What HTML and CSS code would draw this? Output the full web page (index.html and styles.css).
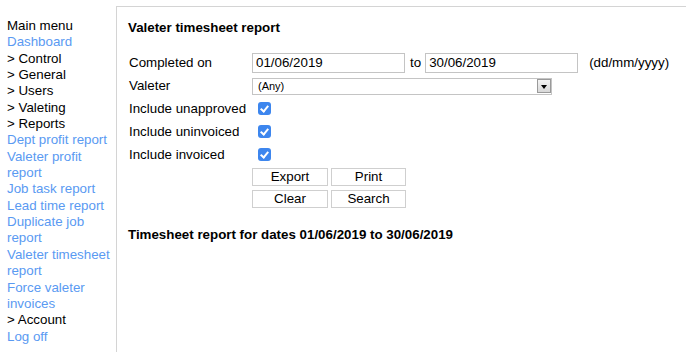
FILE: index.html
```html
<!DOCTYPE html>
<html>
<head>
<meta charset="utf-8">
<link rel="stylesheet" href="styles.css">
</head>
<body>
<nav class="menu">
  <div class="item">Main menu</div>
  <a class="link" href="#">Dashboard</a>
  <div class="item">&gt; Control</div>
  <div class="item">&gt; General</div>
  <div class="item">&gt; Users</div>
  <div class="item">&gt; Valeting</div>
  <div class="item">&gt; Reports</div>
  <a class="link" href="#">Dept profit report</a>
  <a class="link" href="#">Valeter profit report</a>
  <a class="link" href="#">Job task report</a>
  <a class="link" href="#">Lead time report</a>
  <a class="link" href="#">Duplicate job report</a>
  <a class="link" href="#">Valeter timesheet report</a>
  <a class="link" href="#">Force valeter invoices</a>
  <div class="item">&gt; Account</div>
  <a class="link" href="#">Log off</a>
</nav>
<main class="panel">
  <h1 class="title">Valeter timesheet report</h1>
  <form class="form">
    <div class="label">Completed on</div>
    <div class="control dates">
      <input class="text" type="text" value="01/06/2019">
      <span class="to">to</span>
      <input class="text" type="text" value="30/06/2019">
      <span class="hint">(dd/mm/yyyy)</span>
    </div>
    <div class="label">Valeter</div>
    <div class="control">
      <span class="select-wrap"><select class="select"><option>(Any)</option></select></span>
    </div>
    <div class="label">Include unapproved</div>
    <div class="control"><input class="check" type="checkbox" checked></div>
    <div class="label">Include uninvoiced</div>
    <div class="control"><input class="check" type="checkbox" checked></div>
    <div class="label">Include invoiced</div>
    <div class="control"><input class="check" type="checkbox" checked></div>
    <div class="label"></div>
    <div class="control buttons">
      <button type="button" class="btn">Export</button>
      <button type="button" class="btn">Print</button>
      <button type="button" class="btn">Clear</button>
      <button type="button" class="btn">Search</button>
    </div>
  </form>
  <h2 class="result">Timesheet report for dates 01/06/2019 to 30/06/2019</h2>
</main>
</body>
</html>
```
FILE: styles.css
```css
* { box-sizing: border-box; }
html, body { margin: 0; padding: 0; background: #fff; }
body {
  display: flex;
  font-family: "Liberation Sans", Arial, sans-serif;
  font-size: 13.33px;
  color: #000;
  height: 352px;
  overflow: hidden;
}
.menu {
  width: 116px;
  flex: none;
  padding: 18px 4px 0 7px;
  line-height: 16.35px;
}
.menu .item, .menu .link { display: block; }
.menu .link { color: #5a9af2; text-decoration: none; }
.panel {
  flex: 1;
  margin-top: 6px;
  border-top: 1px solid #d4d4d4;
  border-left: 1px solid #d4d4d4;
  padding: 13px 0 0 11px;
}
.title, .result {
  font-size: 13.33px;
  font-weight: bold;
  line-height: 16px;
  margin: 0;
}
.form {
  margin: 15px 0 0 1px;
  display: grid;
  grid-template-columns: 123px auto;
  grid-auto-rows: 23px;
  align-items: center;
}
.control { display: flex; align-items: center; }
.text {
  width: 153px;
  height: 20px;
  border: 1px solid #c4c4c4;
  padding: 0 3px;
  font: inherit;
  font-size: 13.33px;
  margin: 0;
  color: #000;
}
.to { margin: 0 4px 0 5px; }
.hint { margin-left: 11px; }
.select-wrap { position: relative; display: inline-block; margin-top: 1px; }
.select {
  appearance: none;
  -webkit-appearance: none;
  width: 300px;
  height: 17px;
  border: 1px solid #c4c4c4;
  border-radius: 0;
  background: #fff;
  font-family: "Liberation Sans", Arial, sans-serif;
  font-size: 11px;
  padding: 0 0 0 5px;
  margin: 0;
  color: #000;
}
.select-wrap::after {
  content: "";
  position: absolute;
  right: 1px;
  top: 1px;
  width: 14px;
  height: 14px;
  background: linear-gradient(#f4f4f4, #d8d8d8);
  border: 1px solid #9a9a9a;
  box-sizing: border-box;
  pointer-events: none;
}
.select-wrap::before {
  content: "";
  position: absolute;
  right: 5px;
  top: 7px;
  border-left: 3px solid transparent;
  border-right: 3px solid transparent;
  border-top: 4px solid #000;
  z-index: 1;
  pointer-events: none;
}
.check {
  appearance: none;
  -webkit-appearance: none;
  width: 13px;
  height: 13px;
  margin: 0 0 0 6px;
  border-radius: 3px;
  background: #3d86ee;
  position: relative;
}
.check::after {
  content: "";
  position: absolute;
  left: 4px;
  top: 2px;
  width: 3px;
  height: 6px;
  border-right: 2px solid #fff;
  border-bottom: 2px solid #fff;
  transform: rotate(40deg);
}
.buttons {
  grid-row: span 2;
  display: grid;
  grid-template-columns: 76px 75px;
  column-gap: 3px;
  row-gap: 4px;
  align-self: start;
  margin-top: 2px;
}
.btn {
  height: 18px;
  border: 1px solid #cfcfcf;
  background: #fff;
  font-family: "Liberation Sans", Arial, sans-serif;
  font-size: 13.33px;
  padding: 0;
  margin: 0;
  color: #000;
  line-height: 16px;
}
.result { margin-top: 15px; }
```
